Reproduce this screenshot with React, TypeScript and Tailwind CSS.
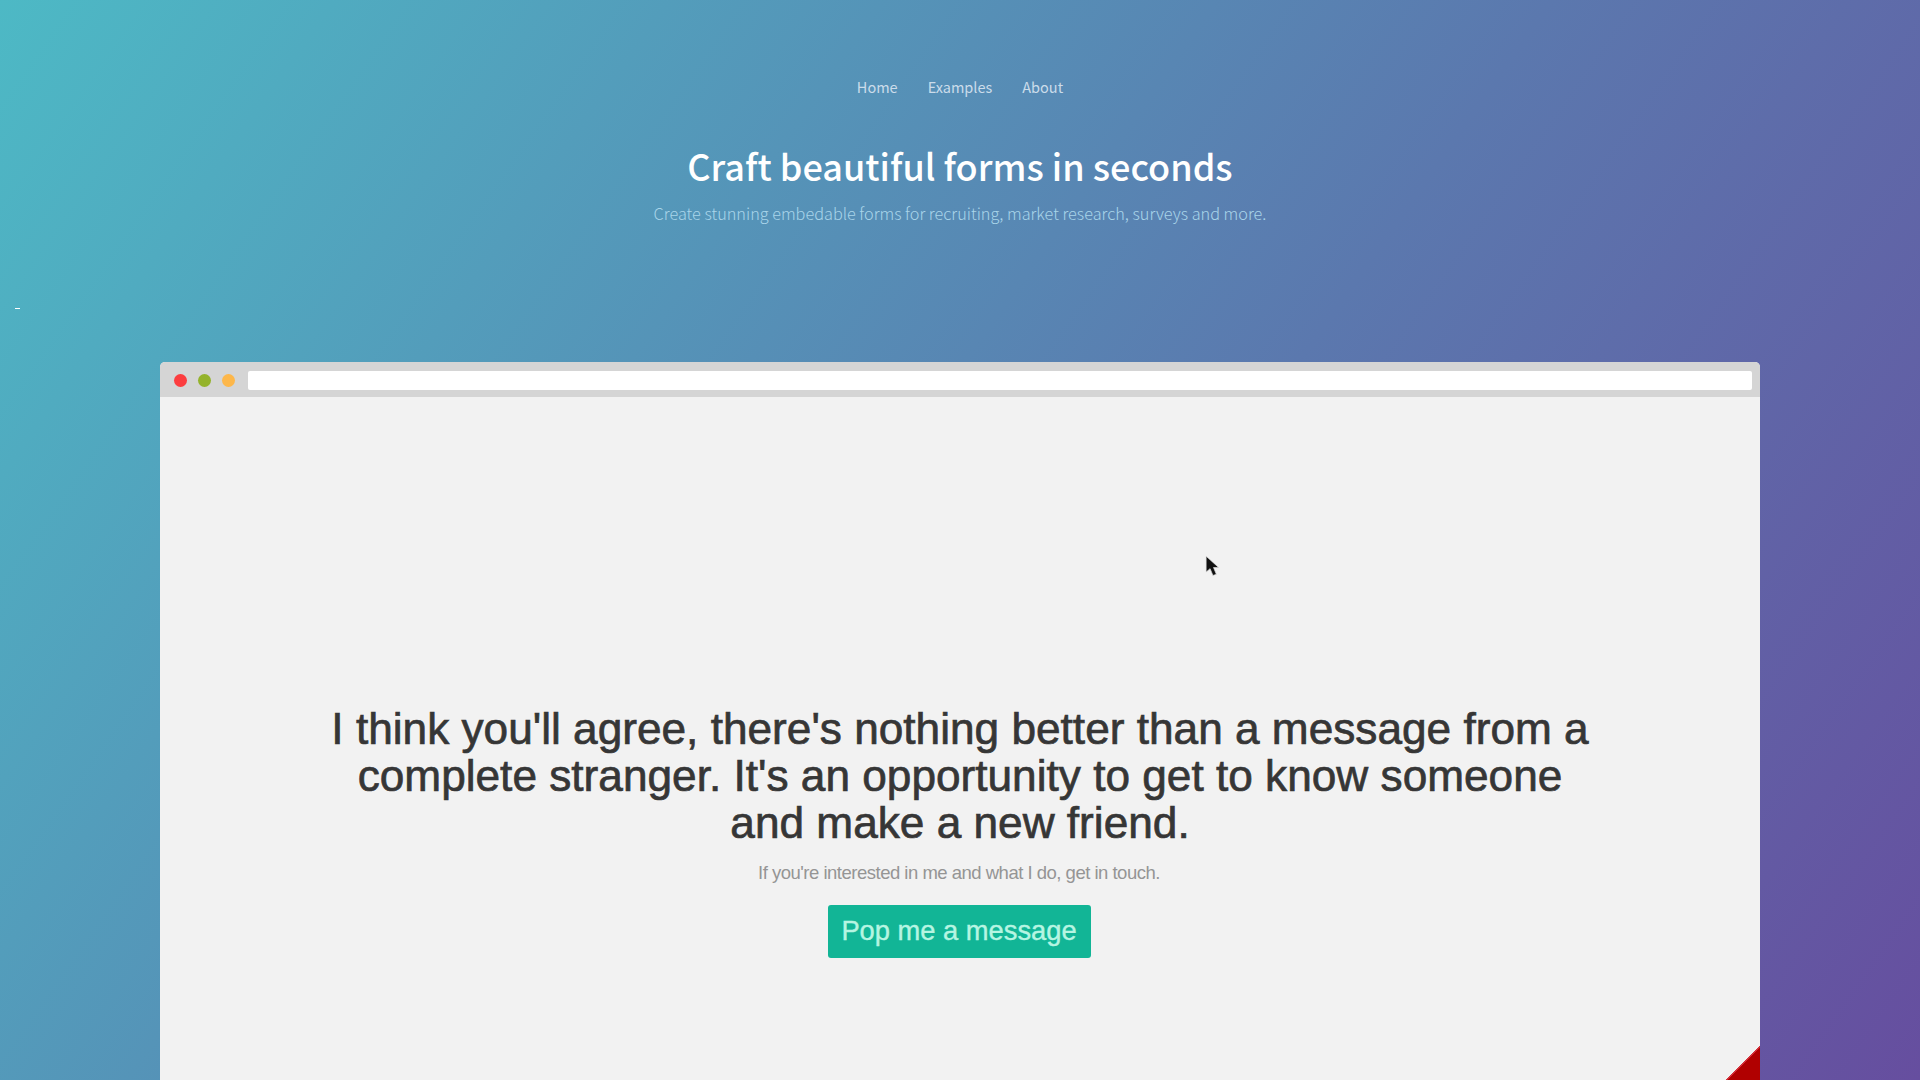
const headerFont = "font-['Noto_Sans_CJK_SC','Noto_Sans',sans-serif]";

function Cursor() {
  return (
    <svg className="absolute left-[1205px] top-[555px] h-[25px] w-[17px] blur-[0.4px]" viewBox="0 0 15 22">
      <path d="M1 1 L1 15 L4.5 12 L7 18 L10 17 L7.5 11 L12 11 Z" fill="#111" stroke="#ddd" strokeWidth="0.6" />
    </svg>
  );
}

export default function App() {
  return (
    <div className="relative flex h-screen w-full flex-col overflow-hidden bg-[linear-gradient(125deg,#4db9c5_0%,#5b78ae_58%,#664e9f_100%)]">
      <header className={`flex h-[362px] shrink-0 flex-col items-center ${headerFont}`}>
        <nav className="mt-[76px] flex gap-[30px] text-[14.5px] leading-[22px] text-[#cbdcea]">
          <a href="#">Home</a>
          <a href="#">Examples</a>
          <a href="#">About</a>
        </nav>
        <h1 className="mt-[42px] text-[36px] leading-[50px] font-medium text-white">
          Craft beautiful forms in seconds
        </h1>
        <p className="mt-[10px] text-[16.25px] leading-[26px] font-light text-[#a9d5ea]">
          Create stunning embedable forms for recruiting, market research, surveys and more.
        </p>
      </header>

      <span className="absolute left-[15px] top-[308px] h-px w-[5px] bg-white" />

      <section className="relative mx-[160px] flex-1 overflow-hidden rounded-t-[5px] bg-[#f2f2f2] font-['Liberation_Sans',sans-serif]">
        <div className="flex h-[35px] items-center bg-[#d5d5d5] pl-[14px] pr-[8px] pt-[2px]">
          <div className="flex gap-[11px]">
            <span className="h-[13px] w-[13px] rounded-full bg-[#fc3d3f]" />
            <span className="h-[13px] w-[13px] rounded-full bg-[#94b32b]" />
            <span className="h-[13px] w-[13px] rounded-full bg-[#fdb74a]" />
          </div>
          <div className="ml-[13px] h-[19px] flex-1 rounded-[2px] bg-white" />
        </div>
        <div className="flex flex-col items-center pt-[308px]">
          <h2 className="w-[1280px] text-center text-[44.2px] leading-[47px] text-[#363636] [-webkit-text-stroke:0.7px_#363636]">
            I think you'll agree, there's nothing better than a message from a complete stranger. It's an opportunity to get to know someone and make a new friend.
          </h2>
          <p className="mt-[14px] mr-[2px] text-[18.5px] leading-[26px] tracking-[-0.5px] text-[#959595]">
            If you're interested in me and what I do, get in touch.
          </p>
          <a href="#" className="mt-[19px] mr-[2px] flex h-[53px] w-[263px] items-center justify-center rounded-[3px] bg-[#12b596] text-[27.3px] text-[#b6f5e2] [-webkit-text-stroke:0.4px_#b6f5e2]">
            Pop me a message
          </a>
        </div>
        <div className="absolute bottom-0 right-0 h-[34px] w-[34px] bg-[linear-gradient(to_bottom_right,transparent_49%,#d32f3a_49%,#d32f3a_52%,#b00000_52%)]" />
      </section>
      <Cursor />
    </div>
  );
}
